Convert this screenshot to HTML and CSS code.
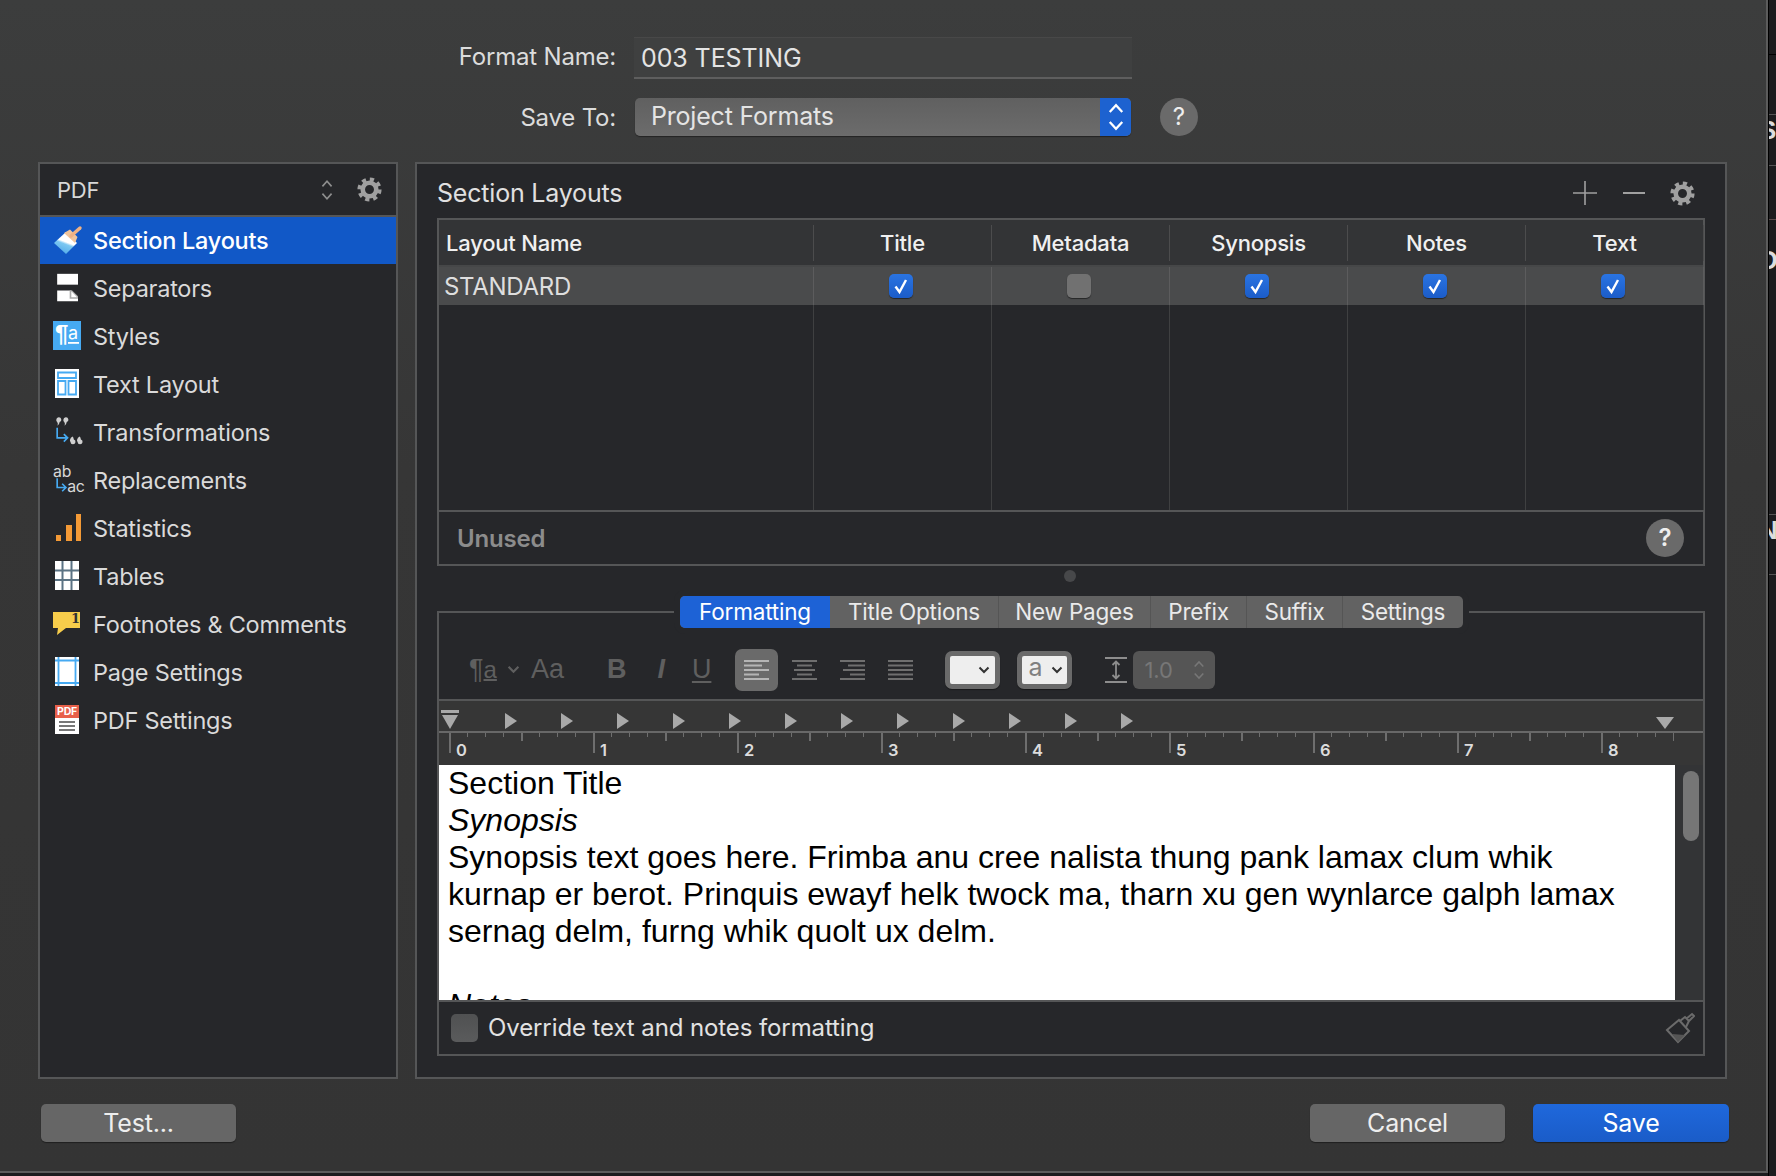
FILE: index.html
```html
<!DOCTYPE html>
<html lang="en">
<head>
  <meta charset="UTF-8">
  <title>Compile Format Designer</title>
  <link rel="stylesheet" href="styles.css">
</head>
<body>
  <svg class="defs" width="0" height="0">
    <symbol id="gear" viewBox="0 0 24 24">
      <circle cx="12" cy="12" r="6.5" fill="none" stroke="currentColor" stroke-width="4.4"/>
      <circle cx="12" cy="12" r="9.8" fill="none" stroke="currentColor" stroke-width="3.6" stroke-dasharray="4 3.7"/>
    </symbol>
    <symbol id="updown" viewBox="0 0 14 24">
      <path d="M2 8 L7 2.5 L12 8 M2 16 L7 21.5 L12 16" fill="none" stroke="currentColor" stroke-width="1.8"/>
    </symbol>
    <symbol id="chevron" viewBox="0 0 12 8">
      <path d="M1.5 1.5 L6 6 L10.5 1.5" fill="none" stroke="currentColor" stroke-width="2"/>
    </symbol>
    <symbol id="tick" viewBox="0 0 24 24">
      <path d="M6.5 12.5 L10.5 18 L17 6" fill="none" stroke="#fff" stroke-width="2.4"/>
    </symbol>
  </svg>

  <div class="window">
    <div class="form-row name-row">
      <label>Format Name:</label>
      <div class="name-input">003 TESTING</div>
    </div>
    <div class="form-row save-row">
      <label>Save To:</label>
      <div class="select">
        <span>Project Formats</span>
        <div class="select-arrows"><svg width="18" height="30"><use href="#updown"/></svg></div>
      </div>
      <div class="help">?</div>
    </div>

    <div class="columns">
      <div class="sidebar">
        <div class="sidebar-head">
          <span>PDF</span>
          <svg class="head-updown" width="14" height="22"><use href="#updown"/></svg>
          <svg class="gear" width="25" height="25"><use href="#gear"/></svg>
        </div>

        <div class="side-item selected">
          <svg class="side-icon" viewBox="0 0 30 30">
            <defs><linearGradient id="bristle" x1="0.7" y1="0" x2="0.3" y2="1"><stop offset="0.45" stop-color="#fff"/><stop offset="0.55" stop-color="#7cc8f2"/><stop offset="1" stop-color="#4fa9e8"/></linearGradient></defs>
            <path d="M1 17 L13 6 L24 17 L13 28 Z" fill="url(#bristle)"/>
            <path d="M11 7 L17 3.500 L24.500 11 L22 17 Z" fill="#efc49c"/>
            <path d="M18 10 L27 2" stroke="#eeb184" stroke-width="3.400" stroke-linecap="round"/>
          </svg>
          <span>Section Layouts</span>
        </div>
        <div class="side-item">
          <svg class="side-icon" viewBox="0 0 30 36">
            <rect x="2" y="1" width="25" height="13" fill="#fff"/>
            <path d="M2 21 H19 L27 29 V34 H2 Z" fill="#fff"/>
            <path d="M17 21 H20 L27 28 V31 H17 Z" fill="#aaa"/>
            <path d="M19 22 L19 29 H26" fill="#fff"/>
          </svg>
          <span>Separators</span>
        </div>
        <div class="side-item">
          <svg class="side-icon" viewBox="0 0 30 30">
            <rect x="0" y="0" width="28" height="29" fill="#46aaf2"/>
            <text x="2" y="21" class="ico-pil">¶</text>
            <text x="15" y="18" class="ico-a">a</text>
            <rect x="15" y="21" width="11" height="1.800" fill="#fff"/>
          </svg>
          <span>Styles</span>
        </div>
        <div class="side-item">
          <svg class="side-icon" viewBox="0 0 30 30">
            <rect x="2" y="0" width="24" height="29" fill="#fff"/>
            <path d="M5 3.500 H23 V9 H5 Z M5 12 H12.500 V25.500 H5 Z M15.500 12 H23 V25.500 H15.500 Z" fill="none" stroke="#46aaf2" stroke-width="1.800"/>
          </svg>
          <span>Text Layout</span>
        </div>
        <div class="side-item">
          <svg class="side-icon" viewBox="0 0 34 36">
            <path d="M3 3 a3 3 0 1 1 4 3 q-0.500 3 -2.500 4.500 q0.800 -3 -0.500 -4.500 a3 3 0 0 1 -1 -3 Z M11.500 3 a3 3 0 1 1 4 3 q-0.500 3 -2.500 4.500 q0.800 -3 -0.500 -4.500 a3 3 0 0 1 -1 -3 Z" fill="#cfcfcf"/>
            <path d="M4 13 V25 H16 M12 20.500 L16.500 25 L12 29.500" fill="none" stroke="#46aaf2" stroke-width="2"/>
            <path d="M20 30 a3 3 0 1 0 4 -3 q-0.500 -3 -1.500 -3.500 q-2.500 1.500 -3 3.500 a3 3 0 0 0 0.500 3 Z M28.500 30 a3 3 0 1 0 4 -3 q-0.500 -3 -1.500 -3.500 q-2.500 1.500 -3 3.500 a3 3 0 0 0 0.500 3 Z" fill="#cfcfcf"/>
          </svg>
          <span>Transformations</span>
        </div>
        <div class="side-item">
          <svg class="side-icon" viewBox="0 0 36 36">
            <text x="0" y="14" class="ico-ab">ab</text>
            <path d="M5 16 V27 H15 M11 22.500 L15.500 27 L11 31.500" fill="none" stroke="#46aaf2" stroke-width="2"/>
            <text x="17" y="32" class="ico-ab">ac</text>
          </svg>
          <span>Replacements</span>
        </div>
        <div class="side-item">
          <svg class="side-icon" viewBox="0 0 30 30">
            <rect x="3" y="22" width="5" height="6" fill="#f49a36"/>
            <rect x="13" y="12" width="6" height="16" fill="#f49a36"/>
            <rect x="23" y="1" width="5" height="27" fill="#f49a36"/>
          </svg>
          <span>Statistics</span>
        </div>
        <div class="side-item">
          <svg class="side-icon" viewBox="0 0 30 30">
            <rect x="2" y="0" width="24" height="29" fill="#fff"/>
            <path d="M9.500 0 V29 M18.500 0 V29 M2 9.500 H26 M2 19 H26" stroke="#5b7384" stroke-width="2"/>
          </svg>
          <span>Tables</span>
        </div>
        <div class="side-item">
          <svg class="side-icon" viewBox="0 0 30 30">
            <path d="M0 3 H27 V19 H13 L4 26 L5 19 H0 Z" fill="#f7cd4b"/>
            <text x="18" y="14" class="ico-one">1</text>
          </svg>
          <span>Footnotes &amp; Comments</span>
        </div>
        <div class="side-item">
          <svg class="side-icon" viewBox="0 0 30 30">
            <rect x="2" y="0" width="24" height="29" fill="#fff"/>
            <path d="M5.500 0 V29 M22.500 0 V29 M2 3.500 H26 M2 26 H26" stroke="#46aaf2" stroke-width="1.800"/>
          </svg>
          <span>Page Settings</span>
        </div>
        <div class="side-item">
          <svg class="side-icon" viewBox="0 0 30 30">
            <rect x="2" y="0" width="24" height="29" fill="#fff"/>
            <rect x="2" y="0" width="24" height="13" fill="#e8604a"/>
            <text x="14" y="10" class="ico-pdf">PDF</text>
            <path d="M6 17 H22 M6 21 H22 M6 25 H22" stroke="#777" stroke-width="1.800"/>
          </svg>
          <span>PDF Settings</span>
        </div>
      </div>

      <div class="panel">
        <div class="panel-head">
          <h2>Section Layouts</h2>
          <div class="panel-tools">
            <svg width="26" height="26"><path d="M13 1 V25 M1 13 H25" stroke="#a0a0a0" stroke-width="1.600"/></svg>
            <svg width="24" height="26"><path d="M1 13 H23" stroke="#a0a0a0" stroke-width="2"/></svg>
            <svg class="gear" width="25" height="25"><use href="#gear"/></svg>
          </div>
        </div>

        <div class="layouts">
          <div class="row header-row">
            <div class="cell name">Layout Name</div>
            <div class="cell">Title</div>
            <div class="cell">Metadata</div>
            <div class="cell">Synopsis</div>
            <div class="cell">Notes</div>
            <div class="cell last">Text</div>
          </div>
          <div class="row standard-row">
            <div class="cell name">STANDARD</div>
            <div class="cell"><div class="check on"><svg width="24" height="24"><use href="#tick"/></svg></div></div>
            <div class="cell"><div class="check"></div></div>
            <div class="cell"><div class="check on"><svg width="24" height="24"><use href="#tick"/></svg></div></div>
            <div class="cell"><div class="check on"><svg width="24" height="24"><use href="#tick"/></svg></div></div>
            <div class="cell"><div class="check on"><svg width="24" height="24"><use href="#tick"/></svg></div></div>
          </div>
          <div class="row blank-row">
            <div class="cell"></div>
            <div class="cell"></div>
            <div class="cell"></div>
            <div class="cell"></div>
            <div class="cell"></div>
            <div class="cell"></div>
          </div>
          <div class="unused">
            <span>Unused</span>
            <div class="help">?</div>
          </div>
        </div>

        <div class="split-dot"></div>

        <div class="format-box">
          <div class="tabs">
            <div class="tab active">Formatting</div>
            <div class="tab t2">Title Options</div>
            <div class="tab t3">New Pages</div>
            <div class="tab t4">Prefix</div>
            <div class="tab t5">Suffix</div>
            <div class="tab t6">Settings</div>
          </div>

          <div class="toolbar">
            <span class="tool pilcrow">¶<u>a</u></span>
            <svg class="tool-chev" width="13" height="9"><use href="#chevron"/></svg>
            <span class="tool aa">Aa</span>
            <span class="tool bold">B</span>
            <span class="tool italic">I</span>
            <span class="tool under">U</span>
            <div class="align active">
              <svg width="25" height="20"><path d="M0 1 H25 M0 5.500 H18 M0 10 H25 M0 14.500 H15 M0 19 H25" stroke="#b5b5b5" stroke-width="1.800"/></svg>
            </div>
            <div class="align">
              <svg width="25" height="20"><path d="M0 1 H25 M5 5.500 H20 M2 10 H23 M5 14.500 H20 M0 19 H25" stroke="#6f6f6f" stroke-width="1.800"/></svg>
            </div>
            <div class="align">
              <svg width="25" height="20"><path d="M0 1 H25 M8 5.500 H25 M3 10 H25 M10 14.500 H25 M0 19 H25" stroke="#6f6f6f" stroke-width="1.800"/></svg>
            </div>
            <div class="align">
              <svg width="25" height="20"><path d="M0 1 H25 M0 5.500 H25 M0 10 H25 M0 14.500 H25 M0 19 H25" stroke="#6f6f6f" stroke-width="1.800"/></svg>
            </div>
            <div class="well first"><svg width="12" height="8"><use href="#chevron"/></svg></div>
            <div class="well"><span>a</span><svg width="12" height="8"><use href="#chevron"/></svg></div>
            <svg class="spacing-icon" width="22" height="26"><path d="M0 1 H22 M0 25 H22 M11 5 V21 M7.500 8 L11 4.500 L14.500 8 M7.500 18 L11 21.500 L14.500 18" fill="none" stroke="#8d8d8d" stroke-width="1.800"/></svg>
            <div class="spacing">
              <span>1.0</span>
              <svg width="12" height="22"><use href="#updown"/></svg>
            </div>
          </div>

          <div class="ruler">
            <div class="ruler-marks">
              <div class="indent"></div>
              <i></i><i></i><i></i><i></i><i></i><i></i><i></i><i></i><i></i><i></i><i></i><i></i>
              <div class="right-margin"></div>
            </div>
            <div class="ruler-scale">
              <span>0</span><span>1</span><span>2</span><span>3</span><span>4</span><span>5</span><span>6</span><span>7</span><span>8</span>
            </div>
          </div>

          <div class="preview">
            <div class="preview-text">
              <div>Section Title</div>
              <div><em>Synopsis</em></div>
              <div>Synopsis text goes here. Frimba anu cree nalista thung pank lamax clum whik</div>
              <div>kurnap er berot. Prinquis ewayf helk twock ma, tharn xu gen wynlarce galph lamax</div>
              <div>sernag delm, furng whik quolt ux delm.</div>
              <div>&nbsp;</div>
              <div><em>Notes</em></div>
            </div>
            <div class="scroll-track"><div class="scroll-thumb"></div></div>
          </div>

          <div class="override">
            <div class="override-check"></div>
            <span>Override text and notes formatting</span>
            <svg class="clear-brush" width="30" height="32" viewBox="0 0 30 32">
              <path d="M2 18 L14 8 L24 19 L13 30 Z" fill="none" stroke="#6b6b6b" stroke-width="2"/>
              <path d="M7 22 L20 23 L13 30 Z" fill="#555"/>
              <path d="M15 9 L20 5 L24 9 L21 15 M21 7 L27 2 L29 4 L23 10" fill="none" stroke="#6b6b6b" stroke-width="2"/>
            </svg>
          </div>
        </div>
      </div>
    </div>

    <div class="footer">
      <button class="btn test">Test...</button>
      <button class="btn cancel">Cancel</button>
      <button class="btn save">Save</button>
    </div>
  </div>

  <div class="behind">
    <div class="behind-row r1"></div>
    <div class="behind-row r2"></div>
    <div class="behind-row r3"><span>S</span></div>
    <div class="behind-row r4"><span>t</span></div>
    <div class="behind-row r5"><span>D</span></div>
    <div class="behind-row r6"><span>N</span></div>
  </div>
</body>
</html>
```

FILE: styles.css
```css
* {
  margin: 0;
  padding: 0;
  box-sizing: border-box;
}
body {
  width: 1776px;
  height: 1176px;
  overflow: hidden;
  display: flex;
  background: #1c1c1e;
  font-family: Inter, "Noto Sans", sans-serif;
  color: #e4e4e4;
}
.defs {
  position: absolute;
}
.window {
  width: 1768px;
  height: 1173px;
  padding: 37px 0 0 38px;
  background: linear-gradient(#3c3d3d, #363636 40%, #343434);
  border-right: 2px solid #5c5c5c;
  border-bottom: 2px solid #5c5c5c;
  flex-shrink: 0;
}

/* top form */
.form-row {
  display: flex;
  align-items: center;
}
.form-row label {
  width: 578px;
  margin-right: 18px;
  text-align: right;
  font-size: 24px;
  letter-spacing: -0.2px;
  color: #dcdcdc;
}
.name-row {
  height: 42px;
}
.name-row label {
  margin-top: -4px;
}
.name-input {
  width: 498px;
  height: 42px;
  padding: 5px 0 0 7px;
  background: #3f4040;
  border-top: 1px solid #484848;
  border-bottom: 2px solid #5e5e5e;
  font-size: 25px;
  letter-spacing: -0.1px;
}
.save-row {
  height: 38px;
  margin-top: 19px;
}
.select {
  width: 496px;
  height: 38px;
  margin-left: 1px;
  display: flex;
  justify-content: space-between;
  background: linear-gradient(#606060, #6c6c6c);
  border-radius: 5px;
  overflow: hidden;
  font-size: 25px;
  letter-spacing: -0.2px;
  box-shadow: 0 1px 1px rgba(0, 0, 0, 0.4);
}
.select span {
  padding: 3px 0 0 16px;
}
.select-arrows {
  width: 31px;
  color: #fff;
  background: #1d62d0;
  display: flex;
  align-items: center;
  justify-content: center;
}
.help {
  width: 38px;
  height: 38px;
  border-radius: 50%;
  background: #6a6a6a;
  color: #eee;
  font-size: 24px;
  line-height: 38px;
  text-align: center;
}
.save-row .help {
  margin-left: 29px;
}

/* the two big boxes */
.columns {
  display: flex;
  gap: 17px;
  height: 917px;
  margin-top: 26px;
}
.sidebar {
  width: 360px;
  background: #26272a;
  border: 2px solid #555657;
}
.sidebar-head {
  height: 53px;
  display: flex;
  align-items: center;
  padding: 0 14px 0 17px;
  border-bottom: 2px solid #555657;
  font-size: 22px;
  letter-spacing: -0.2px;
}
.sidebar-head span {
  flex: 1;
  color: #d8d8d8;
}
.head-updown {
  color: #8e8e8e;
  margin-right: 23px;
}
.gear {
  color: #a0a0a0;
}
.side-item {
  height: 48px;
  display: flex;
  align-items: center;
  font-size: 23.500px;
  letter-spacing: -0.25px;
  color: #dadada;
}
.side-item.selected {
  height: 47px;
  background: #1158c7;
  color: #fff;
  font-weight: 500;
}
.side-icon {
  width: 30px;
  height: 30px;
  margin: 0 10px 0 13px;
  flex-shrink: 0;
  overflow: visible;
}
.ico-pil {
  font: 700 24px "Liberation Sans", sans-serif;
  fill: #fff;
}
.ico-a {
  font: 400 18px Inter, sans-serif;
  fill: #fff;
}
.ico-ab {
  font: 400 19px Inter, sans-serif;
  fill: #d8d8d8;
}
.ico-one {
  font: 700 13px "DejaVu Serif", serif;
  fill: #333;
}
.ico-pdf {
  font: 700 10.500px Inter, sans-serif;
  fill: #fff;
  text-anchor: middle;
}

/* right panel */
.panel {
  width: 1312px;
  padding: 0 20px;
  background: #26272a;
  border: 2px solid #555657;
}
.panel-head {
  height: 54px;
  display: flex;
  align-items: center;
  justify-content: space-between;
  padding: 4px 10px 0 0;
}
.panel-head h2 {
  font-size: 25px;
  font-weight: 400;
  letter-spacing: -0.2px;
  color: #e0e0e0;
}
.panel-tools {
  display: flex;
  align-items: center;
  gap: 24px;
}
.layouts {
  height: 348px;
  border: 2px solid #555657;
  display: flex;
  flex-direction: column;
}
.row {
  display: grid;
  grid-template-columns: 375px repeat(5, 178px);
}
.header-row {
  height: 47px;
  align-items: center;
  background: #333436;
  border-bottom: 2px solid #464748;
  font-size: 22px;
  font-weight: 500;
  letter-spacing: -0.2px;
  color: #f0f0f0;
}
.header-row .cell {
  height: 36px;
  display: flex;
  align-items: center;
  justify-content: center;
  border-right: 1px solid #4c4c4d;
}
.header-row .cell.name {
  justify-content: flex-start;
  padding-left: 7px;
}
.standard-row {
  height: 38px;
  background: #4a4b4c;
}
.standard-row .cell {
  display: flex;
  align-items: center;
  justify-content: center;
  border-right: 1px solid #5c5c5d;
}
.standard-row .cell.name {
  justify-content: flex-start;
  padding-left: 5px;
  font-size: 24px;
  letter-spacing: -0.3px;
  color: #dedede;
}
.check {
  width: 24px;
  height: 24px;
  margin-left: -3px;
  border-radius: 5px;
  background: #717171;
  box-shadow: 0 1px 1px rgba(0, 0, 0, 0.5);
}
.check.on {
  background: linear-gradient(#2a74e2, #1b5cc8);
}
.check svg {
  display: block;
}
.blank-row {
  flex: 1;
  border-bottom: 2px solid #555657;
}
.blank-row .cell {
  border-right: 1px solid #3f4041;
}
.unused {
  height: 52px;
  display: flex;
  align-items: center;
  justify-content: space-between;
  padding: 0 19px 0 18px;
  font-size: 24px;
  font-weight: 600;
  letter-spacing: -0.2px;
  color: #8c8c8c;
}
.split-dot {
  width: 12px;
  height: 12px;
  margin: 4px auto 0;
  transform: translateX(-1px);
  border-radius: 50%;
  background: #47484a;
}

/* formatting box */
.format-box {
  height: 445px;
  margin-top: 29px;
  border: 2px solid #555657;
}
.tabs {
  display: flex;
  width: max-content;
  height: 32px;
  margin: -17px 0 0 241px;
  border-radius: 5px;
  background: #626262;
  box-shadow: 0 0 0 6px #26272a;
  font-size: 22.500px;
  letter-spacing: -0.2px;
  line-height: 31px;
  text-align: center;
  color: #eaeaea;
}
.tab {
  width: 169px;
  border-right: 1px solid #555;
}
.tab.active {
  width: 150px;
  border: none;
  border-radius: 5px 0 0 5px;
  background: #1d62d6;
  color: #fff;
}
.tab.t3 {
  width: 152px;
}
.tab.t4 {
  width: 96px;
}
.tab.t5 {
  width: 96px;
}
.tab.t6 {
  width: 120px;
  border: none;
}
.toolbar {
  height: 73px;
  padding: 12px 0 0 0;
  display: flex;
  align-items: center;
  border-bottom: 2px solid #555657;
  color: #5f5f5f;
}
.tool {
  font-size: 27px;
  line-height: 1;
}
.pilcrow {
  margin-left: 30px;
  font-family: "Liberation Sans", sans-serif;
}
.pilcrow u {
  font-size: 24px;
  text-decoration-thickness: 2px;
}
.tool-chev {
  margin-left: 10px;
}
.aa {
  margin-left: 11px;
  width: 32px;
  font-family: "Liberation Sans", sans-serif;
}
.bold {
  margin-left: 44px;
  font-weight: 700;
  font-family: "Liberation Sans", sans-serif;
}
.italic {
  margin-left: 31px;
  font-style: italic;
  font-weight: 700;
  font-family: "Liberation Sans", sans-serif;
}
.under {
  margin-left: 27px;
  text-decoration: underline;
  text-underline-offset: 3px;
  text-decoration-thickness: 2px;
  font-family: "Liberation Sans", sans-serif;
}
.align {
  width: 43px;
  height: 42px;
  margin-right: 5px;
  display: flex;
  align-items: center;
  justify-content: center;
  border-radius: 7px;
}
.align.active {
  margin-left: 24px;
  background: #6a6a6a;
}
.well {
  width: 55px;
  height: 38px;
  margin-left: 17px;
  border: 5px solid #6a6a6a;
  border-radius: 7px;
  background: #eeeeee;
  display: flex;
  align-items: center;
  justify-content: flex-end;
  padding-right: 4px;
  color: #333;
  box-shadow: 0 1px 1px rgba(0, 0, 0, 0.4);
}
.well.first {
  margin-left: 18px;
  padding-right: 5px;
}
.well span {
  flex: 1;
  padding: 0 0 4px 6px;
  font-size: 25px;
  line-height: 1;
  color: #808080;
}
.spacing-icon {
  margin-left: 33px;
}
.spacing {
  width: 82px;
  height: 38px;
  margin-left: 6px;
  padding: 0 10px 0 11px;
  display: flex;
  align-items: center;
  justify-content: space-between;
  border-radius: 6px;
  background: #555;
  color: #777;
  font-size: 22px;
}

/* ruler */
.ruler {
  height: 64px;
  background: #363636;
}
.ruler-marks {
  height: 32px;
  display: flex;
  align-items: flex-end;
  padding-bottom: 2px;
  border-bottom: 2px solid #686868;
}
.ruler-marks i {
  width: 0;
  height: 0;
  margin-right: 44px;
  border-left: 12px solid #a9a9a9;
  border-top: 8.500px solid transparent;
  border-bottom: 8.500px solid transparent;
}
.indent {
  width: 18px;
  height: 19px;
  margin: 0 46px 0 2px;
  border-top: 3px solid #a9a9a9;
  position: relative;
}
.indent::after {
  content: "";
  position: absolute;
  top: 2px;
  left: 1px;
  border-top: 14px solid #a9a9a9;
  border-left: 8px solid transparent;
  border-right: 8px solid transparent;
}
.right-margin {
  margin: 0 29px 0 auto;
  border-top: 12px solid #a9a9a9;
  border-left: 9px solid transparent;
  border-right: 9px solid transparent;
}
.ruler-scale {
  height: 30px;
  width: 1235px;
  display: flex;
  padding-left: 10px;
  background-image:
    linear-gradient(90deg, #6e6e6e 2px, transparent 2px),
    linear-gradient(90deg, #6e6e6e 2px, transparent 2px),
    linear-gradient(90deg, #6e6e6e 1px, transparent 1px);
  background-size: 144px 20px, 72px 8px, 18px 4px;
  background-position: 10px 0;
  background-repeat: repeat-x;
  font-size: 16.500px;
  font-weight: 600;
  color: #dcdcdc;
}
.ruler-scale span {
  width: 144px;
  flex-shrink: 0;
  padding: 7px 0 0 7px;
}
.preview {
  height: 235px;
  display: flex;
}
.preview-text {
  width: 1236px;
  padding-left: 9px;
  overflow: hidden;
  background: #fff;
  color: #000;
  font-family: "Liberation Sans", Arial, sans-serif;
  font-size: 32px;
  line-height: 37px;
  white-space: nowrap;
}
.scroll-track {
  flex: 1;
  padding: 6px 0 0 8px;
  background: #333436;
}
.scroll-thumb {
  width: 16px;
  height: 70px;
  border-radius: 8px;
  background: #767676;
}
.override {
  height: 53px;
  display: flex;
  align-items: center;
  border-top: 2px solid #555657;
  padding: 0 8px 0 12px;
  font-size: 24px;
  letter-spacing: -0.1px;
  color: #e2e2e2;
}
.override span {
  flex: 1;
  margin-left: 10px;
}
.override-check {
  width: 27px;
  height: 28px;
  border-radius: 5px;
  background: linear-gradient(#505152, #5a5b5c);
}

/* bottom buttons */
.footer {
  display: flex;
  width: 1688px;
  margin: 25px 0 0 3px;
}
.btn {
  width: 195px;
  height: 38px;
  border: none;
  border-radius: 5px;
  background: #666;
  color: #eee;
  font-family: Inter, "Noto Sans", sans-serif;
  font-size: 25px;
  letter-spacing: -0.2px;
  box-shadow: 0 1px 1px rgba(0, 0, 0, 0.4);
}
.cancel {
  margin-left: auto;
}
.save {
  width: 196px;
  margin-left: 28px;
  background: linear-gradient(#1f68dc, #1a5cc8);
  color: #fff;
}

/* sliver of the window behind */
.behind {
  flex: 1;
  overflow: hidden;
  border-left: 1px solid #000;
  color: #ddd;
  font: 700 26px "Liberation Sans", sans-serif;
}
.behind-row {
  overflow: hidden;
  white-space: nowrap;
}
.behind-row span {
  display: block;
  margin-left: -10px;
}
.r1 {
  height: 55px;
  border-bottom: 1px solid #000;
}
.r2 {
  height: 60px;
  border-bottom: 1px solid #555;
}
.r3 {
  height: 51px;
  border-bottom: 1px solid #555;
}
.r4 {
  height: 54px;
  border-bottom: 1px solid #5a4a4a;
}
.r5 {
  height: 295px;
  border-bottom: 1px solid #555;
  line-height: 80px;
}
.r6 {
  height: 60px;
  border-bottom: 1px solid #555;
}
```
